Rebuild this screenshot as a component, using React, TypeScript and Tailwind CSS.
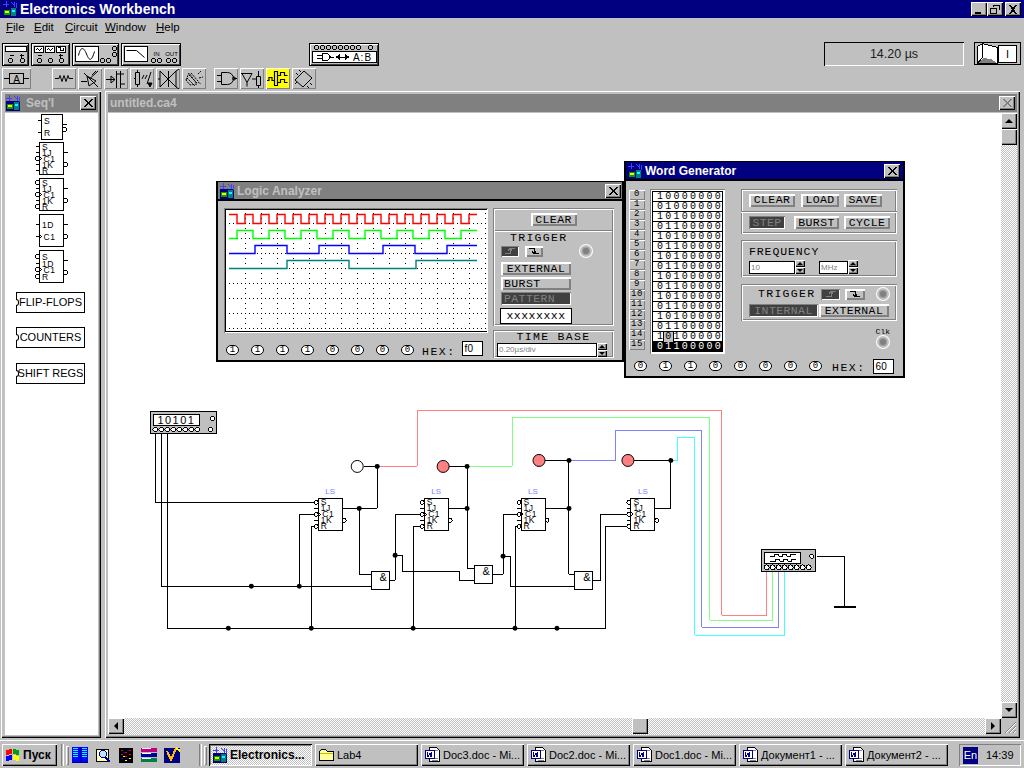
const raised = 'bg-[#c0c0c0] shadow-[inset_1px_1px_0_#fff,inset_-1px_-1px_0_#000,inset_-2px_-2px_0_#808080]'
const sunken = 'shadow-[inset_1px_1px_0_#808080,inset_-1px_-1px_0_#fff]'
const panel = 'shadow-[inset_1px_1px_0_#808080,inset_2px_2px_0_#fff,inset_-1px_-1px_0_#fff,inset_-2px_-2px_0_#808080]'
const mono = "[font-family:'Liberation_Mono',monospace]"
const dither = 'bg-[image:repeating-conic-gradient(#c0c0c0_0_25%,#fff_0_50%)] bg-[length:2px_2px]'
const instBtn = 'bg-[#c0c0c0] shadow-[inset_2px_2px_0_#fff,inset_-2px_-2px_0_#808080]'
const instDark = 'bg-[#404040] text-[#808080] shadow-[inset_1px_1px_0_#808080,inset_-1px_-1px_0_#fff]'

type Pin = [string, number, 'o' | 't' | 'c' | 'n']

function EwbIcon() {
  return (
    <svg width="16" height="16" viewBox="0 0 16 16" shapeRendering="crispEdges" className="shrink-0">
      <rect x="1" y="6" width="14" height="10" fill="#000080" />
      <rect x="2" y="9" width="6" height="5" fill="#00a000" />
      <rect x="3" y="10" width="4" height="2" fill="#ffff00" />
      <rect x="9" y="7" width="5" height="8" fill="#008080" />
      <rect x="10" y="9" width="3" height="2" fill="#00ffff" />
      <path d="M1 3h6M4 0v6M9 1l3 3M12 1v5M14 2v5" stroke="#4040ff" fill="none" />
    </svg>
  )
}

function WinBtn({ kind }: { kind: 'min' | 'max' | 'close' }) {
  return (
    <div className={`w-[16px] h-[14px] ${raised} flex items-center justify-center`}>
      <svg width="10" height="9" viewBox="0 0 10 9" shapeRendering="crispEdges">
        {kind === 'min' && <rect x="1" y="7" width="6" height="2" fill="#000" />}
        {kind === 'max' && <path d="M3 .5h6v4.500M3 0v2M.5 3h6v5.500h-6zM0 3.500h7" stroke="#000" fill="none" />}
        {kind === 'close' && <path d="M1 0h2l2 3 2-3h2L6 4.500 9 9H7L5 6 3 9H1l3-4.500z" fill="#000" />}
      </svg>
    </div>
  )
}

function CloseBox({ faded }: { faded?: boolean }) {
  return (
    <div className={`w-[16px] h-[14px] ${raised} flex items-center justify-center`}>
      <svg width="9" height="8" viewBox="0 0 9 8" shapeRendering="crispEdges">
        <path d="M0 0h2l2.500 3L7 0h2L5.500 4 9 8H7L4.500 5 2 8H0l3.500-4z" fill={faded ? '#808080' : '#000'} />
      </svg>
    </div>
  )
}

// top toolbar row, the chunky instrument buttons
function InstBtn({ w, ml, children }: { w: number; ml?: string; children: React.ReactNode }) {
  return (
    <div className={`mt-px h-[23px] border border-black bg-[#c0c0c0] shadow-[inset_1px_1px_0_#fff,inset_-1px_-1px_0_#404040] ${ml ?? ''}`} style={{ width: w }}>
      <svg width={w - 2} height="21" viewBox={`0 0 ${w - 2} 21`} shapeRendering="crispEdges">
        <g transform="translate(.5 .5)" fill="none" stroke="#000">{children}</g>
      </svg>
    </div>
  )
}

function Dot({ x, y }: { x: number; y: number }) {
  return <circle cx={x} cy={y} r="2" fill="#c0c0c0" stroke="#000" />
}

function ToolBtn({ yellow, w = 24, ml, children }: { yellow?: boolean; w?: number; ml?: string; children: React.ReactNode }) {
  return (
    <div className={`h-[21px] ${ml ?? ''} shadow-[inset_1px_1px_0_#fff,inset_-1px_-1px_0_#808080] ${yellow ? 'bg-[#ffff00]' : 'bg-[#c0c0c0]'}`} style={{ width: w }}>
      <svg width={w} height="21" viewBox={`0 0 ${w} 21`}>
        <g fill="none" stroke="#000" strokeWidth="1">{children}</g>
      </svg>
    </div>
  )
}

// flip-flop symbol, used on the palette and on the canvas
function FlipFlop({ x, y, labels, h = 32, w = 24 }: { x: number; y: number; labels: Pin[]; h?: number; w?: number }) {
  return (
    <g transform={`translate(${x} ${y})`}>
      <rect x="0" y="0" width={w} height={h} fill="#fff" stroke="#000" />
      {labels.map(([t, ly, pin]) => (
        <g key={t + ly}>
          {pin === 't' && <path d={`M-4 ${ly}h4`} stroke="#000" fill="none" />}
          {(pin === 'o' || pin === 'c') && <circle cx="-2" cy={ly} r="2" fill="#fff" stroke="#000" />}
          {pin === 'n' && <path d={`M-4 ${ly}h4M0 ${ly - 2}l2 2-2 2`} stroke="#000" fill="none" />}
          {pin === 'c' && <path d={`M0 ${ly - 2}l2 2-2 2`} stroke="#000" fill="none" />}
          <text x={pin === 'c' || pin === 'n' ? 4 : 2.500} y={ly + 3} fontSize="8.500" fill="#000" stroke="none" letterSpacing=".5">
            {t}
          </text>
        </g>
      ))}
      <path d={`M${w} 10h4`} stroke="#000" fill="none" />
      <circle cx={w + 2} cy={h - 10} r="2" fill="#fff" stroke="#000" />
    </g>
  )
}

const jkOpen: Pin[] = [['S', 4, 't'], ['1J', 10, 't'], ['C1', 16, 'c'], ['1K', 22, 't'], ['R', 28, 't']]
const jkAll: Pin[] = [['S', 4, 'o'], ['1J', 10, 't'], ['C1', 16, 'c'], ['1K', 22, 't'], ['R', 28, 'o']]
const d1: Pin[] = [['1D', 10, 't'], ['C1', 22, 'n']]
const d2: Pin[] = [['S', 6, 'o'], ['1D', 13, 't'], ['C1', 19, 'c'], ['R', 26, 'o']]
const sr: Pin[] = [['S', 6, 't'], ['R', 18, 't']]

function PaletteFF({ labels, h = 32, w = 24, className }: { labels: Pin[]; h?: number; w?: number; className?: string }) {
  return (
    <svg width="36" height={h + 2} viewBox={`-5.500 -.5 36 ${h + 2}`} shapeRendering="crispEdges" className={className}>
      <FlipFlop x={0} y={0} labels={labels} h={h} w={w} />
    </svg>
  )
}

function PaletteBtn({ label, mt }: { label: string; mt: string }) {
  return (
    <div className={`relative ml-[11px] ${mt} w-[69px] h-[21px] border border-black bg-white flex items-center justify-center text-[11px] whitespace-nowrap text-black`}>
      <div className="absolute -left-px top-[6px] w-[3px] h-[7px] bg-white border border-l-0 border-black rounded-r-full" />
      {label}
    </div>
  )
}

function Led() {
  return (
    <div className="w-[12px] h-[12px] rounded-full bg-[#808080] border-2 border-[#c0c0c0] shadow-[0_0_0_1px_#fff,inset_0_0_0_1px_#a0a0a0]" />
  )
}

function Toggle({ v }: { v: number }) {
  return (
    <div className={`w-[13px] h-[10px] rounded-full border border-black bg-white flex items-center justify-center text-[9px] leading-none ${mono}`}>
      {v}
    </div>
  )
}

function Btn({ label, w, h = 13, dark, className }: { label: string; w: number; h?: number; dark?: boolean; className?: string }) {
  return (
    <div className={`flex items-center justify-center text-[11.500px] tracking-[.4px] ${mono} ${dark ? instDark : instBtn} ${className ?? ''}`} style={{ width: w, height: h }}>
      {label}
    </div>
  )
}

function EdgeIcon({ falling, dark, w = 18 }: { falling?: boolean; dark?: boolean; w?: number }) {
  return (
    <div className={`h-[11px] flex items-center justify-center ${dark ? instDark : instBtn}`} style={{ width: w }}>
      <svg width="12" height="9" viewBox="0 0 12 9" shapeRendering="crispEdges">
        <path d={falling ? 'M1 1.500h5v5h5M4 4.500l2 2 2-2' : 'M1 6.500h5v-5h5M4 3.500l2-2 2 2'} fill="none" stroke={dark ? '#808080' : '#000'} />
      </svg>
    </div>
  )
}

function Spin() {
  return (
    <div className="w-[10px] h-[14px] flex flex-col">
      <div className={`h-[7px] ${raised} flex items-center justify-center`}>
        <div className="w-0 h-0 border-x-[3px] border-x-transparent border-b-[3px] border-b-black" />
      </div>
      <div className={`h-[7px] ${raised} flex items-center justify-center`}>
        <div className="w-0 h-0 border-x-[3px] border-x-transparent border-t-[3px] border-t-black" />
      </div>
    </div>
  )
}

function Hex() {
  return <span className={`text-[11.500px] tracking-[1.500px] ${mono}`}>HEX:</span>
}

function LogicPlot() {
  let dots = ''
  for (let i = 0; i < 16; i++) for (let y = 213; y < 331; y += 5) dots += `M${245 + i * 16} ${y}h1`
  for (let j = 0; j < 8; j++) for (let x = 229; x < 487; x += 4) dots += `M${x} ${223 + j * 15}h1`
  let red = 'M229 214.500H237'
  for (let x = 237; x < 477; x += 8) {
    const hi = (x - 237) % 16 === 0
    red += `V${hi ? 223.5 : 214.5}H${Math.min(x + 8, 477)}`
  }
  let green = 'M229 238.500H237'
  for (let x = 237; x < 477; x += 16) {
    const hi = (x - 237) % 32 === 0
    green += `V${hi ? 230.5 : 238.5}H${Math.min(x + 16, 477)}`
  }
  return (
    <svg width="261" height="121" viewBox="226 210 261 121" className="block bg-white">
      <path d={dots} stroke="#000" shapeRendering="crispEdges" />
      <g fill="none" strokeWidth="1.400">
        <path d={red} stroke="#ff0000" />
        <path d={green} stroke="#00ff00" />
        <path d="M229 253.500H255V245.500H287V253.500H319V245.500H349V253.500H383V245.500H415V253.500H447V245.500H477" stroke="#0000ff" />
        <path d="M229 268.500H287V260.500H349V268.500H416V260.500H477" stroke="#008080" />
      </g>
    </svg>
  )
}

function LogicAnalyzer() {
  return (
    <div className="absolute left-[216px] top-[181px] w-[408px] h-[181px] border-x-2 border-b-2 border-t border-black bg-[#c0c0c0] flex flex-col">
      <div className="h-[17px] bg-[#808080] flex items-center pl-[1px] pr-[1px]">
        <EwbIcon />
        <span className="ml-[2px] text-[12px] font-bold text-[#c0c0c0]">Logic Analyzer</span>
        <div className="ml-auto"><CloseBox /></div>
      </div>
      <div className="h-[2px] bg-black" />
      <div className="flex pl-[6px] pt-[7px]">
        <div className="w-[264px]">
          <div className="w-[264px] h-[125px] shadow-[inset_1px_1px_0_#808080,inset_-1px_-1px_0_#fff] p-[1px]">
            <div className="border border-black">
              <LogicPlot />
            </div>
          </div>
          <div className="flex items-center mt-[10px] pl-[2px] h-[14px]">
            <div className="flex gap-[12px]">
              {[1, 1, 1, 1, 0, 0, 0, 0].map((v, i) => <Toggle key={i} v={v} />)}
            </div>
            <div className="ml-[8px]"><Hex /></div>
            <div className="ml-[6px] self-start -mt-[2px] w-[21px] h-[15px] border border-black bg-white text-[10px] pl-[2px] leading-[13px]">f0</div>
          </div>
        </div>
        <div className="ml-[5px] w-[121px]">
          <div className={`h-[118px] ${panel}`}>
            <div className="h-[22px] flex justify-center items-center pt-px">
              <Btn label="CLEAR" w={46} />
            </div>
            <div className="h-[2px] mx-[2px] bg-white border-t border-[#808080]" />
            <div className="pl-[8px]">
              <div className={`ml-[9px] h-[11px] flex items-center text-[11.500px] tracking-[1.300px] ${mono}`}>TRIGGER</div>
              <div className="flex items-center mt-[2px]">
                <EdgeIcon dark />
                <div className="ml-[6px]"><EdgeIcon falling /></div>
                <div className="ml-[37px]"><Led /></div>
              </div>
              <div className="mt-[5px] flex flex-col gap-[2px]">
                <Btn label="EXTERNAL" w={70} />
                <Btn label="BURST" w={70} className="justify-start pl-[3px] text-left" />
                <Btn label="PATTERN" w={70} dark className="justify-start pl-[3px]" />
              </div>
              <div className={`-ml-[1px] mt-[3px] w-[72px] h-[16px] border border-black bg-white flex items-center justify-center text-[11.500px] tracking-[.5px] ${mono}`}>xxxxxxxx</div>
            </div>
          </div>
          <div className={`mt-[4px] h-[28px] ${panel} flex flex-col items-center`}>
            <div className={`h-[12px] mt-[1px] flex items-center text-[11.500px] tracking-[1.300px] ${mono}`}>TIME BASE</div>
            <div className="flex w-full pl-[4px] items-center">
              <div className="w-[100px] h-[14px] border border-black bg-white text-[8px] text-[#808080] leading-[12px] pl-[1px]">0.20µs/div</div>
              <Spin />
            </div>
          </div>
        </div>
      </div>
    </div>
  )
}

const words = ['10000000', '01000000', '10100000', '01100000', '10100000', '01100000', '10100000', '01100000', '10100000', '01100000', '10100000', '01100000', '10100000', '01100000', '10100000', '01100000']

function WordGenerator() {
  return (
    <div className="absolute left-[624px] top-[161px] w-[281px] h-[217px] border-x-2 border-b-2 border-t border-black bg-[#c0c0c0] flex flex-col">
      <div className="h-[17px] bg-[#000080] flex items-center pl-[1px] pr-[3px]">
        <EwbIcon />
        <span className="ml-[2px] text-[12px] font-bold text-white">Word Generator</span>
        <div className="ml-auto"><CloseBox /></div>
      </div>
      <div className="h-[2px] bg-black" />
      <div className="flex pl-[3px] pt-[8px]">
        <div className="w-[16px] flex flex-col pt-px">
          {words.map((_, i) => (
            <div key={i} className={`h-[10px] shadow-[inset_1px_1px_0_#fff,inset_-1px_-1px_0_#808080] flex items-center justify-center text-[9px] tracking-[.5px] ${mono}`}>{i}</div>
          ))}
        </div>
        <div className="ml-[5px] w-[75px] p-[2px] bg-white shadow-[inset_1px_1px_0_#808080] h-[165px]">
          <div className="border-t border-x border-black">
            {words.map((w, i) => (
              <div key={i} className={`h-[10px] border-b border-black flex pl-[3px] items-center text-[10px] leading-none ${mono} ${i === 15 ? 'bg-black text-white' : 'bg-white text-black'}`}>
                {w.split('').map((c, j) => (
                  <span key={j} className={`w-[8.700px] text-center ${i === 14 && j === 1 ? 'outline outline-1 outline-black bg-[#c0c0c0]' : ''}`}>{c}</span>
                ))}
              </div>
            ))}
          </div>
        </div>
        <div className="ml-[16px] w-[156px]">
          <div className={`h-[45px] ${panel}`}>
            <div className="h-[22px] flex items-center gap-[6px] pl-[8px]">
              <Btn label="CLEAR" w={46} />
              <Btn label="LOAD" w={38} />
              <Btn label="SAVE" w={38} className="-ml-px" />
            </div>
            <div className="h-[2px] bg-white border-t border-[#808080]" />
            <div className="h-[19px] flex items-center pl-[8px]">
              <Btn label="STEP" w={36} dark />
              <Btn label="BURST" w={45} className="ml-[9px]" />
              <Btn label="CYCLE" w={46} className="ml-[5px]" />
            </div>
          </div>
          <div className={`mt-[6px] h-[37px] ${panel} pl-[8px] pt-[6px]`}>
            <div className={`h-[11px] flex items-center text-[11.500px] tracking-[.9px] ${mono}`}>FREQUENCY</div>
            <div className="flex items-center mt-[3px]">
              <div className="w-[46px] h-[13px] border border-black bg-white text-[8px] text-[#808080] leading-[11px] pl-[1px]">10</div>
              <Spin />
              <div className="ml-[14px] w-[29px] h-[13px] border border-black bg-white text-[8px] text-[#808080] leading-[11px] pl-[1px]">MHz</div>
              <Spin />
            </div>
          </div>
          <div className={`mt-[7px] h-[37px] ${panel} pl-[8px]`}>
            <div className="h-[20px] flex items-center">
              <span className={`ml-[9px] w-[63px] text-[11.500px] tracking-[1.300px] ${mono}`}>TRIGGER</span>
              <EdgeIcon dark w={19} />
              <div className="ml-[5px]"><EdgeIcon falling w={20} /></div>
              <div className="ml-[12px]"><Led /></div>
            </div>
            <div className="flex">
              <Btn label="INTERNAL" w={69} dark />
              <Btn label="EXTERNAL" w={70} className="ml-px" />
            </div>
          </div>
          <div className="flex flex-col items-end pr-[8px] mt-[6px]">
            <span className={`text-[8px] leading-[9px] mr-[-1px] ${mono}`}>Clk</span>
            <Led />
          </div>
        </div>
      </div>
      <div className="flex items-center pl-[8px] mt-[4px] h-[16px]">
        <div className="flex gap-[12px]">
          {[0, 1, 1, 0, 0, 0, 0, 0].map((v, i) => <Toggle key={i} v={v} />)}
        </div>
        <div className="ml-[10px]"><Hex /></div>
        <div className="ml-[7px] w-[21px] h-[15px] border border-black bg-white text-[10px] pl-[2px] leading-[13px]">60</div>
      </div>
    </div>
  )
}

function Circuit() {
  const junctions = [
    [228, 628], [311, 628], [413, 628], [515, 628], [557, 628],
    [251, 586], [299, 586], [359, 508], [377, 466], [395, 555], [467, 508], [467, 466], [503, 556], [569, 508], [569, 460], [671, 460],
  ]
  return (
    <svg width="894" height="605" viewBox="108 113 894 605" shapeRendering="crispEdges" className="block bg-white">
      <g transform="translate(.5 .5)" fill="none">
        {/* black wiring */}
        <path stroke="#000" d="M155 434V502H314M161 434V586H371M167 434V628H606V526H628
          M299 586V514H314M311 628V526H314
          M342 508H377V466H364M359 508V574H371
          M389 580H395V514H420M395 555H402V571H459V580H474M413 628V526H420
          M448 508H467V466H449M467 508V568H474
          M492 574H503V514H517M503 556H510V586H575M515 628V526H517
          M545 508H569V460H545M569 508V574H575
          M593 580H601V514H627
          M655 508H671V460H634" />
        {/* coloured probes */}
        <path stroke="#ff8080" d="M377 466H417V410H722V615H767V572" />
        <path stroke="#80ff80" d="M467 466H512V417H710V620H773V572" />
        <path stroke="#8080ff" d="M569 460H616V430H702V627H779V572" />
        <path stroke="#40ffff" d="M671 460H678V437H695V635H785V572" />
        <path stroke="#000" d="M817 556H845V606M834 607H856M834 606H856" />
      </g>
      {junctions.map(([x, y]) => <circle key={`${x}-${y}`} cx={x + 0.5} cy={y + 0.5} r="2.500" fill="#000" shapeRendering="auto" />)}
      <g shapeRendering="auto">
        <circle cx="357.500" cy="466.500" r="6" fill="#fff" stroke="#000" />
        <circle cx="443.500" cy="466.500" r="6" fill="#ff8080" stroke="#000" />
        <circle cx="539.500" cy="460.500" r="6" fill="#ff8080" stroke="#000" />
        <circle cx="628.500" cy="460.500" r="6" fill="#ff8080" stroke="#000" />
      </g>
      <g transform="translate(.5 .5)">
        <FlipFlop x={318} y={498} labels={jkAll} />
        <FlipFlop x={424} y={498} labels={jkAll} />
        <FlipFlop x={521} y={498} labels={jkAll} />
        <FlipFlop x={631} y={498} labels={jkAll} />
        {[330, 436, 533, 643].map((x) => (
          <text key={x} x={x} y="494" fontSize="8" textAnchor="middle" fill="#8080ff">LS</text>
        ))}
        {[[371, 571], [474, 565], [575, 571]].map(([x, y]) => (
          <g key={x}>
            <rect x={x} y={y} width="18" height="18" fill="#fff" stroke="#000" />
            <text x={x + 12} y={y + 10} fontSize="11" textAnchor="middle" fill="#000">&amp;</text>
          </g>
        ))}
        {/* word generator on the canvas */}
        <rect x="150" y="411" width="66" height="22" fill="#c0c0c0" stroke="#000" />
        <rect x="153" y="414" width="46" height="11" fill="#fff" stroke="#000" />
        <text x="176" y="424" fontSize="11" textAnchor="middle" letterSpacing="1.500" fill="#000">10101</text>
        {[155, 161, 167, 173, 179, 185, 191, 197].map((x) => <circle key={x} cx={x} cy="429" r="2.500" fill="#fff" stroke="#000" />)}
        <circle cx="212" cy="418" r="2" fill="#fff" stroke="#000" />
        <circle cx="210" cy="429" r="2" fill="#fff" stroke="#000" />
        {/* logic analyzer on the canvas */}
        <rect x="762" y="549" width="54" height="22" fill="#c0c0c0" stroke="#000" />
        <rect x="765" y="552" width="36" height="11" fill="#fff" stroke="#000" />
        <path d="M770 556h5v-2h4v2h4v-2h4v2h4v-2h5M770 561h6v-2h4v2h4v-2h4v2h4v-2h4" fill="none" stroke="#000" />
        {[767, 773, 779, 785, 791, 797, 803, 809].map((x) => <circle key={x} cx={x} cy="567" r="2.500" fill="#fff" stroke="#000" />)}
        <circle cx="812" cy="556" r="2" fill="#fff" stroke="#000" />
      </g>
    </svg>
  )
}

function ScrollArrow({ dir }: { dir: 'up' | 'down' | 'left' | 'right' }) {
  const cls = {
    up: 'border-x-[4px] border-x-transparent border-b-[4px] border-b-black',
    down: 'border-x-[4px] border-x-transparent border-t-[4px] border-t-black',
    left: 'border-y-[4px] border-y-transparent border-r-[4px] border-r-black',
    right: 'border-y-[4px] border-y-transparent border-l-[4px] border-l-black',
  }[dir]
  return (
    <div className={`w-[16px] h-[16px] shrink-0 ${raised} flex items-center justify-center`}>
      <div className={`w-0 h-0 ${cls}`} />
    </div>
  )
}

function WordIcon() {
  return (
    <svg width="17" height="16" viewBox="0 0 17 16" shapeRendering="crispEdges" className="shrink-0">
      <path d="M5.500 .5h7l3 3v11h-10z" fill="#fff" stroke="#000" />
      <path d="M11 3h3M8 11h6M8 13h6" stroke="#808080" />
      <rect x="1" y="3" width="10" height="9" fill="#000080" />
      <rect x="2" y="4" width="8" height="7" fill="#fff" />
      <path d="M3 5l1 5 2-4 1 4 1-5" stroke="#000080" fill="none" />
    </svg>
  )
}

function TaskBtn({ label, icon, pressed }: { label: string; icon: React.ReactNode; pressed?: boolean }) {
  return (
    <div
      className={`w-[103px] h-[22px] flex items-center pl-[3px] gap-[2px] whitespace-nowrap overflow-hidden ${
        pressed ? `${dither} text-[12px] shadow-[inset_1px_1px_0_#000,inset_-1px_-1px_0_#fff,inset_2px_2px_0_#808080] font-bold` : `${raised} text-[11px]`
      }`}
    >
      {icon}
      <span>{label}</span>
    </div>
  )
}

function Folder() {
  return (
    <svg width="17" height="14" viewBox="0 0 17 14" shapeRendering="crispEdges" className="shrink-0">
      <path d="M1.500 3.500l2-2h4l2 2h6v9h-14z" fill="#ffff99" stroke="#000" />
      <path d="M2 5h13" stroke="#c0c000" />
    </svg>
  )
}

export default function App() {
  return (
    <div className="relative w-[1024px] h-[768px] overflow-hidden bg-[#c0c0c0] text-black flex flex-col [font-family:'Liberation_Sans',sans-serif]">
      {/* app title */}
      <div className="h-[18px] shrink-0 bg-[#000080] flex items-center pl-[2px] pr-[3px]">
        <EwbIcon />
        <span className="ml-[2px] text-[14px] font-bold text-white">Electronics Workbench</span>
        <div className="ml-auto flex items-center">
          <WinBtn kind="min" />
          <WinBtn kind="max" />
          <div className="ml-[2px]"><WinBtn kind="close" /></div>
        </div>
      </div>
      {/* menu */}
      <div className="h-[24px] shrink-0 flex items-center pl-[6px] pb-[4px] text-[11.500px]">
        <span className="w-[28px]"><u>F</u>ile</span>
        <span className="w-[31px]"><u>E</u>dit</span>
        <span className="w-[40px]"><u>C</u>ircuit</span>
        <span className="w-[51px]"><u>W</u>indow</span>
        <span><u>H</u>elp</span>
      </div>
      {/* instruments row */}
      <div className="h-[24px] shrink-0 flex pl-[2px] gap-[2px]">
        <InstBtn w={27}>
          <rect x="2" y="2" width="21" height="5" fill="#fff" />
          <path d="M6 11h4M18 9v4M16 11h4" />
          <Dot x={7} y={16} /><Dot x={19} y={16} />
        </InstBtn>
        <InstBtn w={39}>
          {[2, 13, 24].map((x) => (
            <g key={x}>
              <rect x={x} y="2" width="9" height="6" fill="#fff" />
            </g>
          ))}
          <path d="M3 6l2-2 2 2 2-2M14 6l2-2 2 2 2-2M25 3h3v3h3V3" />
          <path d="M5 11h4M28 9v4M26 11h4" />
          <Dot x={7} y={16} /><Dot x={18} y={16} /><Dot x={29} y={16} />
        </InstBtn>
        <InstBtn w={47}>
          <rect x="2" y="2" width="23" height="15" fill="#fff" />
          <path d="M5 11C7 2 10 2 13 9.500S18 17 21 7" strokeWidth="1" shapeRendering="auto" />
          <Dot x={29} y={16} /><Dot x={35} y={16} /><Dot x={41} y={4} /><Dot x={41} y={10} />
        </InstBtn>
        <InstBtn w={60}>
          <rect x="2" y="2" width="23" height="15" fill="#fff" />
          <path d="M4 6h10l8 7" shapeRendering="auto" />
          <text x="34" y="11" fontSize="6" stroke="none" fill="#000" textAnchor="middle">IN</text>
          <text x="49" y="11" fontSize="6" stroke="none" fill="#000" textAnchor="middle">OUT</text>
          <Dot x={31} y={16} /><Dot x={37} y={16} /><Dot x={46} y={16} /><Dot x={52} y={16} />
        </InstBtn>
        <InstBtn w={70} ml="ml-[126px]">
          {[6, 12, 18, 24, 30, 36, 42, 48].map((x) => <Dot key={x} x={x} y={3} />)}
          <Dot x={60} y={3} />
          <rect x="2" y="7" width="64" height="11" fill="#fff" />
          <path d="M6 11h6M6 14h6M12 9h5l3 3.500-3 3.500h-5zM20 12.500h3M27 12.500h10" />
          <path d="M29 10.500l-3 2 3 2zM35 10.500l3 2-3 2z" fill="#000" />
          <text x="52" y="16.500" fontSize="10" stroke="none" fill="#000" textAnchor="middle" letterSpacing="1">A:B</text>
        </InstBtn>
        <div className="ml-auto w-[140px] h-[24px] shadow-[inset_1px_1px_0_#000,inset_-1px_-1px_0_#fff] flex items-center justify-center text-[12.500px] text-[#202020]">14.20 µs</div>
        <div className="ml-[8px] mr-[3px] w-[47px] h-[23px] border border-black bg-[#c0c0c0] flex">
          <svg width="23" height="21" viewBox="0 0 23 21" shapeRendering="crispEdges">
            <path d="M2.500 3.500L7.500 .5L22.500 4.500V20.500H2.500z" fill="#fff" stroke="#000" />
            <path d="M7.500 .5V14.500L2.500 20.500" fill="none" stroke="#000" />
            <path d="M3 20l5-5 8 1 6 4z" fill="#808080" />
          </svg>
          <div className="flex-1 mt-[2px] mb-[1px] mr-[3px] bg-white border border-black flex items-center justify-center text-[11px]">I</div>
        </div>
      </div>
      {/* component row */}
      <div className="h-[21px] shrink-0 mt-[2px] flex pl-[2px] gap-[2px]">
        <ToolBtn w={29}>
          <path d="M2 10.500h5M22 10.500h5M7.500 5.500h14v10h-14z" shapeRendering="crispEdges" />
          <text x="14.500" y="14.500" fontSize="10" fill="#000" stroke="none" textAnchor="middle">A</text>
        </ToolBtn>
        <ToolBtn ml="ml-[19px]">
          <path d="M3 10.500h4l1-3 2 6 2-6 2 6 2-6 1 3h4" />
        </ToolBtn>
        <ToolBtn>
          <path d="M3 13.500h6M9 8l9 5-7 5zM6 5l14 14M12 10.500L20 3M14 7l4-4" />
        </ToolBtn>
        <ToolBtn>
          <path d="M2 11.500h9M7 8l4 3.500L7 15zM12.500 3v17M16.500 3v17M12 6h8M17 16h4" />
        </ToolBtn>
        <ToolBtn>
          <path d="M4 10.500h1M5.500 4.500h4v12h-4zM7.500 2v2M7.500 17v2M12 11l2-4M15 11l2-4M17 16l4-12" />
          <path d="M18 15h4l-2 4z" fill="#000" />
        </ToolBtn>
        <ToolBtn>
          <path d="M2 11h2M4 3l8 8-8 8zM12.500 3v16M20 3l-8 8 8 8zM20 3l3-2M20 19l3 2" />
        </ToolBtn>
        <ToolBtn>
          <path d="M5 10l8 8M7 7l8 8M9 5l7 8M16 6l3-3M17 10l4-1M16 14l3 2M4 12l3-7 8 11-7 1z" strokeDasharray="2 1" />
        </ToolBtn>
        <ToolBtn ml="ml-[6px]">
          <path d="M3 7.500h5M3 13.500h5M7.500 4.500h6a6 6 0 0 1 0 12h-6zM20 10.500h3" />
          <circle cx="20" cy="10.500" r="1.500" />
        </ToolBtn>
        <ToolBtn>
          <path d="M2 5.500h10l-5 9zM7 14.500v4M2 5.500H1M16.500 8.500h4v9h-4zM18.500 3v5M18.500 18v2M12 11h4" />
        </ToolBtn>
        <ToolBtn yellow>
          <path d="M1 12.500h2v-3h3v3h2M8.500 3.500h3v14h-3zM11.500 7.500h3v-3h4v3h3M11.500 14.500h3v-3h4v3h3" strokeWidth="1.200" />
        </ToolBtn>
        <ToolBtn>
          <path d="M3 12l9-9 8 7-9 9zM6 7L4 5M9 4L7 2M15 18l2 2M18 15l2 2M5 14l-2 2" />
        </ToolBtn>
      </div>
      {/* workspace */}
      <div className="h-[647px] shrink-0 mt-[2px] flex">
        <div className={`ml-[1px] w-[100px] p-[3px] pl-[4px] flex flex-col ${raised}`}>
          <div className="h-[18px] shrink-0 bg-[#808080] flex items-center pr-[2px]">
            <EwbIcon />
            <span className="ml-[5px] text-[12px] font-bold text-[#c0c0c0]">Seq'l</span>
            <div className="ml-auto"><CloseBox /></div>
          </div>
          <div className="flex-1 bg-white flex flex-col mt-px">
            <div className="flex flex-col items-start pl-[29px] pt-[1px] gap-[2px]">
              <PaletteFF labels={sr} h={25} w={21} className="ml-[2px] -mb-[1px]" />
              <PaletteFF labels={jkOpen} />
              <PaletteFF labels={jkAll} />
              <PaletteFF labels={d1} />
              <PaletteFF labels={d2} />
            </div>
            <PaletteBtn label="FLIP-FLOPS" mt="mt-[8px]" />
            <PaletteBtn label="COUNTERS" mt="mt-[14px]" />
            <PaletteBtn label="SHIFT REGS" mt="mt-[15px]" />
          </div>
        </div>
        <div className={`ml-[4px] w-[915px] p-[3px] flex flex-col ${raised}`}>
          <div className="h-[18px] shrink-0 bg-[#808080] flex items-center pl-[2px] pr-[2px]">
            <span className="text-[12px] font-bold text-[#c0c0c0]">untitled.ca4</span>
            <div className="ml-auto"><CloseBox faded /></div>
          </div>
          <div className="h-px shrink-0 bg-[#c0c0c0]" />
          <div className="flex h-[605px] shrink-0">
            <Circuit />
            <div className={`w-[16px] flex flex-col ${dither}`}>
              <ScrollArrow dir="up" />
              <div className={`w-[16px] h-[16px] ${raised}`} />
              <div className="flex-1" />
              <ScrollArrow dir="down" />
            </div>
          </div>
          <div className="flex h-[17px] shrink-0">
            <ScrollArrow dir="left" />
            <div className={`flex-1 ${dither} flex`}>
              <div className={`ml-[508px] w-[16px] h-[16px] ${raised}`} />
            </div>
            <ScrollArrow dir="right" />
            <div className="w-[16px] h-[16px] flex items-end justify-end">
              <svg width="14" height="14" viewBox="0 0 14 14" shapeRendering="auto">
                <path d="M13 2L2 13M13 6l-7 7M13 10l-3 3" stroke="#808080" />
                <path d="M13 3L3 13M13 7l-6 6M13 11l-2 2" stroke="#fff" />
              </svg>
            </div>
          </div>
        </div>
      </div>
      {/* taskbar */}
      <div className="h-[28px] shrink-0 mt-[2px] shadow-[inset_0_1px_0_#fff] flex items-center pl-[2px] pt-[2px]">
        <div className={`w-[55px] h-[22px] flex items-center pl-[3px] gap-[2px] text-[12px] font-bold ${raised}`}>
          <svg width="16" height="14" viewBox="0 0 16 14" shapeRendering="crispEdges">
            <path d="M1 2l6-1v5l-6 1z" fill="#ff0000" />
            <path d="M8 1l6 1v5l-6-1z" fill="#00a000" />
            <path d="M1 8l6-1v5l-6 1z" fill="#0000ff" />
            <path d="M8 7l6 1v5l-6-1z" fill="#ffff00" />
          </svg>
          Пуск
        </div>
        <div className="ml-[4px] w-[3px] h-[22px] shadow-[inset_1px_0_0_#808080,inset_-1px_0_0_#fff]" />
        <div className="ml-[2px] w-[3px] h-[19px] shadow-[inset_1px_1px_0_#fff,inset_-1px_-1px_0_#808080]" />
        <div className="ml-[3px] flex items-center gap-[7px]">
          <svg width="16" height="16" viewBox="0 0 16 16" shapeRendering="crispEdges">
            <rect x="0" y="0" width="16" height="15" fill="#0000ff" />
            <path d="M1 1h5M1 3h5M1 5h5M1 7h5M1 9h5M10 1h5M10 3h5M10 5h5M10 7h5M10 9h5" stroke="#00ffff" />
            <path d="M8 0v15M0 15h16" stroke="#000080" />
          </svg>
          <svg width="16" height="16" viewBox="0 0 16 16" shapeRendering="crispEdges">
            <rect x="1" y="2" width="12" height="12" fill="#ffffc0" stroke="#000" />
            <circle cx="8" cy="7" r="3.500" fill="#c0e0ff" stroke="#000080" />
            <path d="M10 10l5 5" stroke="#000080" strokeWidth="2" />
          </svg>
          <svg width="16" height="16" viewBox="0 0 16 16" shapeRendering="crispEdges">
            <rect x="1" y="1" width="14" height="15" fill="#000" />
            <path d="M3 3h2M7 5h2M11 3h2M3 7h2M7 9h2M11 7h2" stroke="#ff0000" />
            <path d="M5 5h2M9 3h2M3 11h2M9 11h2" stroke="#0000ff" />
            <path d="M5 9h2M11 11h2M7 13h2" stroke="#ffff00" />
          </svg>
          <svg width="16" height="16" viewBox="0 0 16 16" shapeRendering="crispEdges">
            <rect x="0" y="1" width="16" height="4" fill="#c00080" />
            <rect x="0" y="6" width="16" height="4" fill="#0000a0" />
            <rect x="0" y="11" width="16" height="4" fill="#008040" />
            <path d="M1 1h9M1 6h9M1 11h9" stroke="#fff" />
          </svg>
          <svg width="17" height="16" viewBox="0 0 17 16" shapeRendering="crispEdges">
            <rect x="0" y="1" width="16" height="15" fill="#000080" />
            <path d="M3 4l4 9 5-12" stroke="#ffc000" strokeWidth="2" fill="none" />
            <path d="M12 1l4 3" stroke="#ffff00" strokeWidth="2" />
          </svg>
        </div>
        <div className="ml-[18px] w-[3px] h-[22px] shadow-[inset_1px_0_0_#808080,inset_-1px_0_0_#fff]" />
        <div className="ml-[2px] w-[3px] h-[19px] shadow-[inset_1px_1px_0_#fff,inset_-1px_-1px_0_#808080]" />
        <div className="ml-[2px] flex gap-[3px]">
          <TaskBtn pressed label="Electronics..." icon={<EwbIcon />} />
          <TaskBtn label="Lab4" icon={<Folder />} />
          <TaskBtn label="Doc3.doc - Mi..." icon={<WordIcon />} />
          <TaskBtn label="Doc2.doc - Mi..." icon={<WordIcon />} />
          <TaskBtn label="Doc1.doc - Mi..." icon={<WordIcon />} />
          <TaskBtn label="Документ1 - ..." icon={<WordIcon />} />
          <TaskBtn label="Документ2 - ..." icon={<WordIcon />} />
        </div>
        <div className={`ml-[11px] w-[62px] h-[22px] ${sunken} flex items-center pl-[4px] text-[11px]`}>
          <span className="w-[15px] h-[17px] bg-[#000080] text-white text-center leading-[17px]">En</span>
          <span className="ml-[8px]">14:39</span>
        </div>
      </div>
      <LogicAnalyzer />
      <WordGenerator />
    </div>
  )
}
